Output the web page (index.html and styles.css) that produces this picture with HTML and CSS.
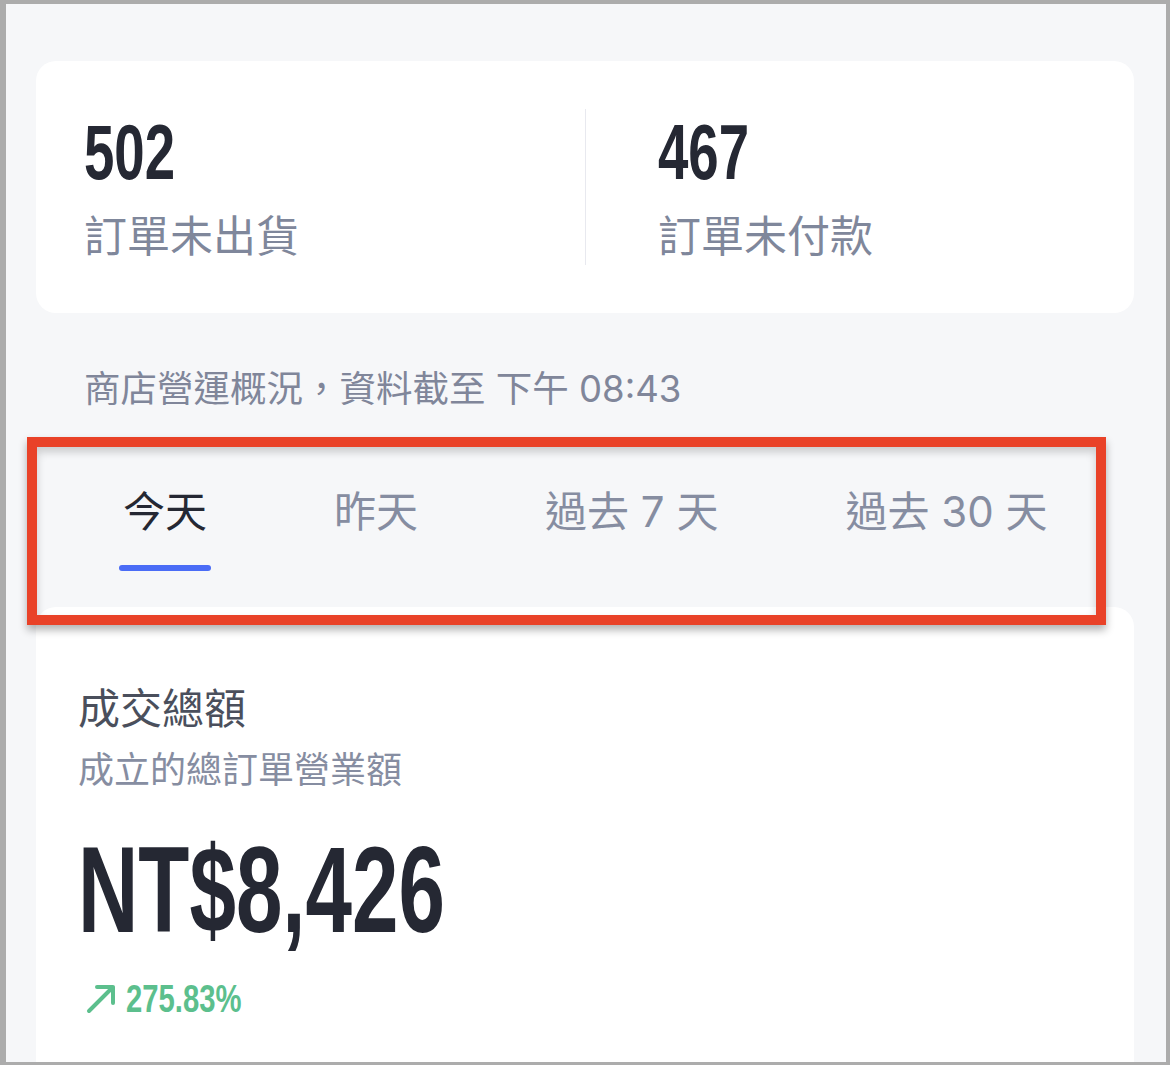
FILE: index.html
```html
<!DOCTYPE html>
<html lang="zh-Hant">
<head>
  <meta charset="UTF-8">
  <meta name="viewport" content="width=device-width, initial-scale=1.0">
  <title>商店營運概況</title>
  <link rel="stylesheet" href="styles.css">
</head>
<body>
  <div class="frame">
    <!-- 訂單狀態 -->
    <div class="card stats">
      <div class="stat">
        <div class="num"><span>502</span></div>
        <div class="stat-label">訂單未出貨</div>
      </div>
      <div class="stat">
        <div class="num"><span>467</span></div>
        <div class="stat-label">訂單未付款</div>
      </div>
    </div>

    <p class="caption">商店營運概況，資料截至 下午 08:43</p>

    <!-- 期間切換 -->
    <div class="tabs">
      <div class="tab active"><span class="tab-text">今天</span><span class="tab-bar"></span></div>
      <div class="tab"><span class="tab-text">昨天</span><span class="tab-bar"></span></div>
      <div class="tab"><span class="tab-text">過去 7 天</span><span class="tab-bar"></span></div>
      <div class="tab"><span class="tab-text">過去 30 天</span><span class="tab-bar"></span></div>
      <div class="highlight"></div>
    </div>

    <!-- 成交總額 -->
    <div class="card sales">
      <h3 class="sales-title">成交總額</h3>
      <p class="sales-sub">成立的總訂單營業額</p>
      <div class="amount"><span>NT$8,426</span></div>
      <div class="growth">
        <svg class="growth-icon" width="30" height="30" viewBox="0 0 30 30">
          <path d="M3 27 L27 3 M11 3 H27 V19" fill="none" stroke="#5cbf8d" stroke-width="4" stroke-linecap="round" stroke-linejoin="round"/>
        </svg>
        <span class="growth-num">275.83%</span>
      </div>
    </div>
  </div>
</body>
</html>
```

FILE: styles.css
```css
/* Base */
html, body {
  margin: 0;
  padding: 0;
}
body {
  font-family: Inter, 'Noto Sans CJK TC', sans-serif;
  color: #252833;
}
.frame {
  box-sizing: border-box;
  height: 1065px;
  overflow: hidden;
  background: #f6f7f9;
  border-style: solid;
  border-color: #acacac;
  border-width: 4px 4px 3px 6px;
  padding: 57px 32px 0 30px;
}
.card {
  background: #fff;
  border-radius: 20px;
}
/* Condensed numbers */
.num span,
.amount span,
.growth-num {
  display: inline-block;
  font-family: 'Liberation Sans', sans-serif;
  font-weight: 700;
  line-height: 1;
  transform: scaleX(0.7);
  transform-origin: left center;
}
/* Order stats */
.stats {
  display: grid;
  grid-template-columns: 1fr 1fr;
  align-items: center;
  height: 252px;
}
.stat {
  height: 156px;
  padding-left: 48px;
}
.stat + .stat {
  border-left: 1px solid #e8e9ef;
  padding-left: 72px;
}
.num {
  margin-top: 3px;
  font-size: 78px;
  line-height: 1;
  height: 78px;
}
.stat-label {
  margin-top: 18px;
  font-size: 43px;
  line-height: 56px;
  color: #7f879b;
}
/* Caption */
.caption {
  margin: 52px 0 0 48px;
  font-size: 36.5px;
  line-height: 48px;
  color: #80869a;
}
/* Tabs */
.tabs {
  position: relative;
  display: flex;
  gap: 119px;
  padding: 71px 0 36px 83px;
}
.tab {
  display: flex;
  flex-direction: column;
  align-items: stretch;
  padding: 0 4px;
  font-size: 42px;
  line-height: 56px;
  color: #868da1;
}
.tab.active {
  color: #252833;
}
.tab-bar {
  display: block;
  height: 6px;
  margin: 25px -4px 0;
  border-radius: 3px;
}
.tab.active .tab-bar {
  background: #4a6cf6;
}
.highlight {
  position: absolute;
  left: -9px;
  top: 24px;
  width: 1079px;
  height: 188px;
  box-sizing: border-box;
  border: 10px solid #e94228;
  box-shadow: 0 5px 8px rgba(0, 0, 0, 0.3), inset 0 5px 8px rgba(0, 0, 0, 0.18);
  pointer-events: none;
  z-index: 2;
}
/* Sales card */
.sales {
  height: 600px;
  padding: 74px 44px 0 42px;
}
.sales-title {
  margin: 0;
  font-size: 42px;
  font-weight: 400;
  line-height: 56px;
  color: #4a4f5c;
}
.sales-sub {
  margin: 9px 0 0;
  font-size: 36px;
  line-height: 48px;
  color: #868da1;
}
.amount {
  margin-top: 33px;
  font-size: 122px;
  line-height: 1;
  height: 122px;
}
.amount span {
  transform: scaleX(0.685);
}
.growth {
  display: flex;
  align-items: center;
  gap: 10px;
  margin-top: 30px;
  padding-left: 8px;
  color: #5cbf8d;
}
.growth-num {
  font-size: 39px;
  transform: scaleX(0.75);
}
```
